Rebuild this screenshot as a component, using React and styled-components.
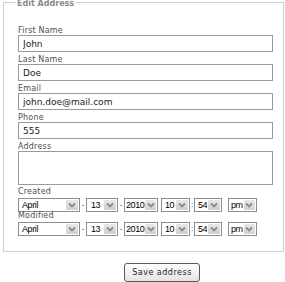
import React from "react"
import styled, { createGlobalStyle } from "styled-components"

const GlobalStyle = createGlobalStyle`
  body {
    margin: 0;
    background: #fff;
    font-family: "DejaVu Sans", Verdana, sans-serif;
  }
`

const Page = styled.div`
  width: 285px;
`

const Box = styled.fieldset`
  margin: -3px 1px 0 3px;
  padding: 16px 10px 15px 14px;
  border: 1px solid #cfcfcf;
  min-width: 0;
`

const Legend = styled.legend`
  position: relative;
  top: 2px;
  padding: 0 1px;
  margin-left: -2px;
  font-size: 8px;
  line-height: 10px;
  font-weight: bold;
  color: #8a8a8a;
`

const Label = styled.label`
  display: block;
  height: 12px;
  font-size: 8px;
  line-height: 15px;
  letter-spacing: 0.2px;
  color: #505050;
`

const DateGroup = styled.div`
  padding-top: 3px;
`

const DateLabel = styled(Label)`
  height: 8px;
  line-height: 8px;
`

const Input = styled.input`
  display: block;
  box-sizing: border-box;
  width: 100%;
  height: 17px;
  margin: 0;
  padding: 0 4px;
  border: 1px solid #9a9a9a;
  font-family: "DejaVu Sans", Verdana, sans-serif;
  font-size: 9px;
  color: #222;
  outline: none;
`

const TextArea = styled.textarea`
  display: block;
  box-sizing: border-box;
  width: 100%;
  height: 34px;
  margin: 0;
  padding: 2px 4px;
  border: 1px solid #9a9a9a;
  resize: none;
  font-family: "DejaVu Sans", Verdana, sans-serif;
  font-size: 9px;
  outline: none;
`

const DateRow = styled.div`
  display: flex;
  align-items: center;
  height: 14px;
  margin-top: 2px;
`

const SelectBox = styled.div`
  box-sizing: border-box;
  display: flex;
  align-items: stretch;
  width: ${p => p.$w}px;
  height: 14px;
  border: 1px solid #8e8e8e;
  background: #fff;
`

const SelectValue = styled.span`
  flex: 1;
  padding-left: ${p => p.$pad}px;
  font-family: "Liberation Sans", Arial, sans-serif;
  font-size: 9px;
  line-height: 12px;
  letter-spacing: -0.4px;
  color: #000;
  white-space: nowrap;
`

const Arrow = styled.span`
  display: flex;
  align-items: center;
  justify-content: center;
  width: 12px;
  margin: 1px;
  background: linear-gradient(#e8e8e8, #d0d0d0);
  border-radius: 1px;
`

const Sep = styled.span`
  width: ${p => p.$w}px;
  text-align: center;
  font-family: "Liberation Sans", Arial, sans-serif;
  font-size: 8px;
  line-height: 12px;
  color: #333;
`

const ButtonRow = styled.div`
  padding: 8px 0 0 124px;
`

const SaveButton = styled.button`
  box-sizing: border-box;
  width: 76px;
  height: 19px;
  padding: 0;
  border: 1px solid #5a5a5a;
  border-radius: 3px;
  background: linear-gradient(#ffffff, #e4e4e4);
  font-family: "DejaVu Sans", Verdana, sans-serif;
  font-size: 8px;
  letter-spacing: 0.5px;
  color: #222;
`

function Select({ value, width, pad = 2 }) {
  return (
    <SelectBox $w={width}>
      <SelectValue $pad={pad}>{value}</SelectValue>
      <Arrow>
        <svg width="8" height="6" viewBox="0 0 8 6">
          <path d="M1 1.5 L4 4.5 L7 1.5" fill="none" stroke="#8a8a8a" strokeWidth="1.8" />
        </svg>
      </Arrow>
    </SelectBox>
  )
}

function DateFields() {
  return (
    <DateRow>
      <Select value="April" width={62} pad={3} />
      <Sep $w={6}>-</Sep>
      <Select value="13" width={32} pad={4} />
      <Sep $w={6}>-</Sep>
      <Select value="2010" width={34} pad={1} />
      <Sep $w={3} />
      <Select value="10" width={29} pad={3} />
      <Sep $w={4}>:</Sep>
      <Select value="54" width={28} pad={3} />
      <Sep $w={6} />
      <Select value="pm" width={29} pad={2} />
    </DateRow>
  )
}

const fields = [
  { label: "First Name", value: "John" },
  { label: "Last Name", value: "Doe" },
  { label: "Email", value: "john.doe@mail.com" },
  { label: "Phone", value: "555" },
]

export default function App() {
  return (
    <Page>
      <GlobalStyle />
      <Box>
        <Legend>Edit Address</Legend>
        {fields.map(f => (
          <div key={f.label}>
            <Label>{f.label}</Label>
            <Input defaultValue={f.value} />
          </div>
        ))}
        <Label>Address</Label>
        <TextArea />
        <DateGroup>
          <DateLabel>Created</DateLabel>
          <DateFields />
          <DateLabel>Modified</DateLabel>
          <DateFields />
        </DateGroup>
      </Box>
      <ButtonRow>
        <SaveButton>Save address</SaveButton>
      </ButtonRow>
    </Page>
  )
}
